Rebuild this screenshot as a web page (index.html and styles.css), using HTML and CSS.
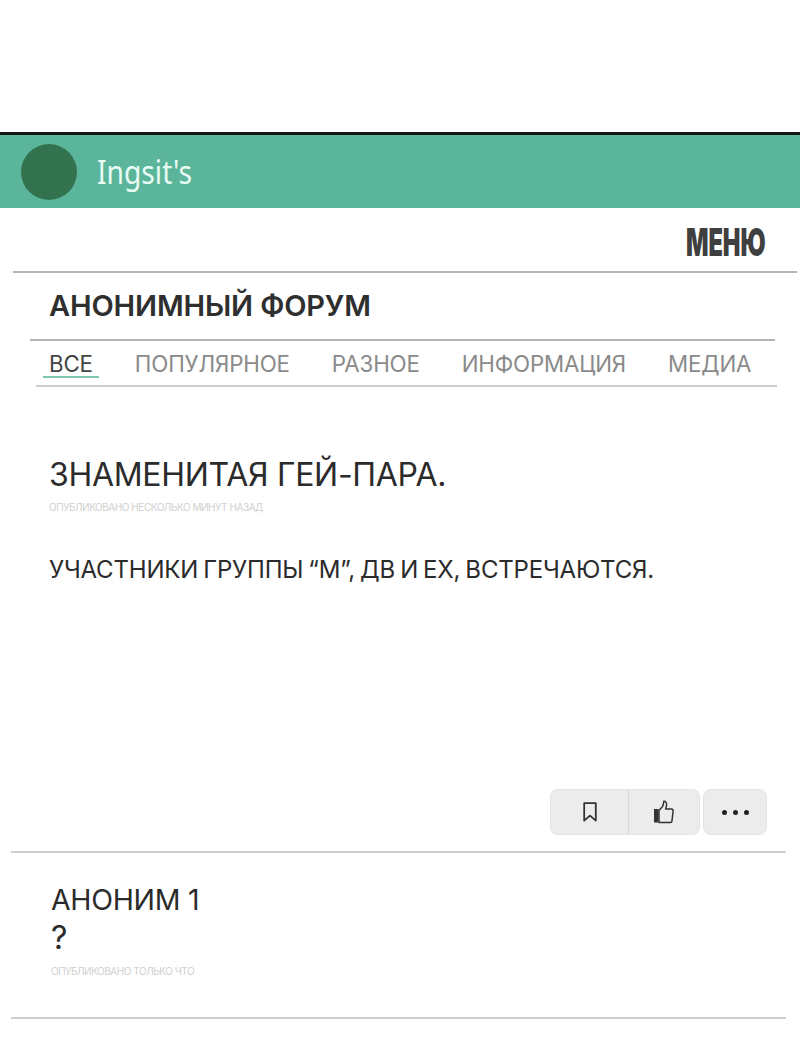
FILE: index.html
```html
<!DOCTYPE html>
<html lang="ru">
<head>
<meta charset="utf-8">
<title>Анонимный форум</title>
<link rel="stylesheet" href="styles.css">
</head>
<body>
<div class="page">
  <header class="brand">
    <div class="avatar"></div>
    <div class="brand-name">Ingsit's</div>
  </header>
  <div class="menu-row"><span class="menu">МЕНЮ</span></div>
  <h1 class="forum-title">АНОНИМНЫЙ ФОРУМ</h1>
  <div class="tabs-rule"></div>
  <nav class="tabs">
    <span class="tab active">ВСЕ</span>
    <span class="tab">ПОПУЛЯРНОЕ</span>
    <span class="tab">РАЗНОЕ</span>
    <span class="tab">ИНФОРМАЦИЯ</span>
    <span class="tab">МЕДИА</span>
  </nav>
  <article class="post">
    <h2 class="post-title">ЗНАМЕНИТАЯ ГЕЙ-ПАРА.</h2>
    <div class="meta">ОПУБЛИКОВАНО НЕСКОЛЬКО МИНУТ НАЗАД</div>
    <p class="post-body">УЧАСТНИКИ ГРУППЫ “М”, ДВ И ЕХ, ВСТРЕЧАЮТСЯ.</p>
    <div class="actions">
      <div class="btn-group">
        <button class="btn btn-save" aria-label="Сохранить">
          <svg width="14" height="20" viewBox="0 0 14 20"><path d="M1.2 1.2H12.8V18.6L7 13.6L1.2 18.6Z" fill="none" stroke="#333" stroke-width="1.8" stroke-linejoin="round"/></svg>
        </button>
        <button class="btn btn-like" aria-label="Нравится">
          <svg width="20" height="24" viewBox="0 0 20 24"><rect x="0" y="9" width="4.5" height="13.5" fill="#333"/><path d="M5 10.5L8.5 6.5C9.5 5 9.6 3 9.8 1.3C11.6 1 12.8 2.6 12.6 4.8C12.4 6.4 12 7.6 11.6 9H17.6C18.6 9 19.2 9.8 19.1 10.8L18 20.8C17.9 21.8 17.2 22.4 16.2 22.4H5Z" fill="none" stroke="#333" stroke-width="1.5" stroke-linejoin="round"/></svg>
        </button>
      </div>
      <button class="btn btn-more" aria-label="Ещё">
        <span class="dot"></span><span class="dot"></span><span class="dot"></span>
      </button>
    </div>
  </article>
  <section class="comment">
    <div class="comment-author">АНОНИМ 1</div>
    <div class="comment-text">?</div>
    <div class="meta comment-meta">ОПУБЛИКОВАНО ТОЛЬКО ЧТО</div>
  </section>
</div>
</body>
</html>
```
FILE: styles.css
```css
* { box-sizing: border-box; }
html, body { margin: 0; padding: 0; background: #fff; }
body { font-family: Inter, "Liberation Sans", sans-serif; color: #2b2b2b; }
.page { width: 800px; height: 1058px; padding-top: 132px; overflow: hidden; }

.brand {
  height: 76px;
  border-top: 3px solid #141414;
  background: #5bb59b;
  display: flex;
  align-items: center;
  padding-left: 21px;
  gap: 20px;
}
.avatar { width: 56px; height: 56px; border-radius: 50%; background: #33724f; }
.brand-name {
  font-family: "Noto Sans", sans-serif;
  font-size: 33px;
  line-height: 40px;
  color: #e8fbf3;
  transform: scaleX(0.855);
  transform-origin: left center;
}

.menu-row {
  margin-left: 13px;
  width: 784px;
  height: 65px;
  border-bottom: 2px solid #b5b5b5;
  display: flex;
  justify-content: flex-end;
  align-items: flex-start;
  padding: 14px 31px 0 0;
}
.menu {
  font-family: Inter, sans-serif;
  font-weight: 900;
  font-size: 38px;
  line-height: 40px;
  color: #3f3f3f;
  transform: scaleX(0.62);
  transform-origin: right center;
}

.forum-title {
  margin: 0;
  padding-left: 49px;
  height: 67px;
  font-size: 29px;
  line-height: 66px;
  font-weight: 600;
  letter-spacing: -0.15px;
  color: #2f2f2f;
}

.tabs-rule { margin-left: 30px; width: 745px; height: 2px; margin-top: -1px; background: #b5b5b5; }
.tabs {
  margin-left: 36px;
  width: 741px;
  height: 46px;
  padding-left: 13px;
  border-bottom: 2px solid #cdcdcd;
  display: flex;
  gap: 42px;
  align-items: flex-start;
}
.tab {
  font-size: 22.3px;
  line-height: 45px;
  color: #8a8a8a;
  letter-spacing: -0.15px;
}
.tab.active { color: #444; position: relative; }
.tab.active::after {
  content: "";
  position: absolute;
  left: -6px;
  right: -6px;
  top: 35px;
  height: 2px;
  background: #7fc7b0;
}

.post { height: 465px; padding: 66px 0 0 49px; position: relative; }
.post-title {
  margin: 0;
  font-size: 32px;
  line-height: 44px;
  font-weight: 400;
  letter-spacing: -0.3px;
  color: #2b2b2b;
}
.meta {
  font-size: 10px;
  line-height: 14px;
  color: #cfcfcf;
  letter-spacing: -0.45px;
}
.post .meta { margin-top: 3px; }
.post-body {
  margin: 38px 0 0;
  font-size: 24px;
  line-height: 36px;
  letter-spacing: -0.18px;
  word-spacing: -1.5px;
  color: #2b2b2b;
}
.actions {
  position: absolute;
  left: 550px;
  top: 402px;
  display: flex;
  gap: 3px;
}
.btn-group { display: flex; width: 150px; }
.btn {
  height: 46px;
  border: 1px solid #e4e4e4;
  background: #ececec;
  padding: 0;
  display: flex;
  align-items: center;
  justify-content: center;
}
.btn-save { width: 79px; border-radius: 8px 0 0 8px; border-right: 1px solid #d8d8d8; }
.btn-like { width: 71px; border-left: 0; border-radius: 0 8px 8px 0; }
.btn-more { width: 64px; border-radius: 8px; gap: 6px; }
.dot { width: 5px; height: 5px; border-radius: 50%; background: #222; }

.comment {
  margin-left: 11px;
  width: 775px;
  height: 168px;
  margin-top: -1px;
  border-top: 2px solid #cfcfcf;
  border-bottom: 2px solid #cfcfcf;
  padding: 28px 0 0 40px;
}
.comment-author { font-size: 28.5px; line-height: 38px; letter-spacing: -0.3px; color: #2b2b2b; }
.comment-text { font-size: 32px; line-height: 38px; font-weight: 400; color: #2b2b2b; }
.comment-meta { margin-top: 7px; }
```
